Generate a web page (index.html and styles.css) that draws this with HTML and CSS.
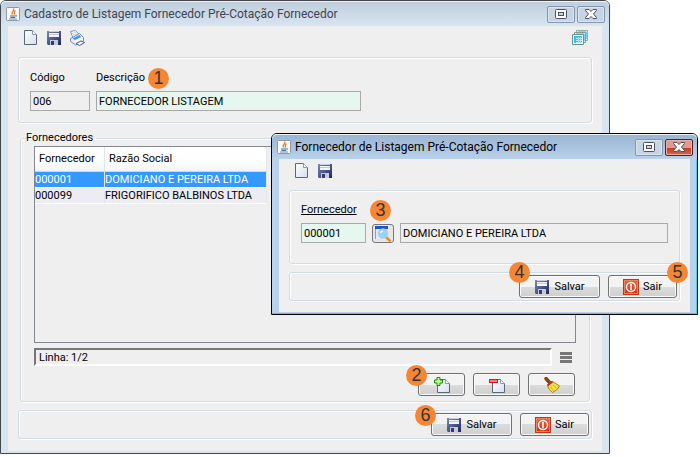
FILE: index.html
```html
<!DOCTYPE html>
<html lang="pt-BR">
<head>
    <meta charset="UTF-8">
    <meta name="viewport" content="width=device-width, initial-scale=1.0">
    <title>Cadastro de Listagem Fornecedor</title>
    <link rel="stylesheet" href="styles.css">
</head>
<body>
    <!-- ícones reutilizados -->
    <svg class="sprite" width="0" height="0" aria-hidden="true">
        <defs>
            <linearGradient id="gPaper" x1="0" y1="0" x2="1" y2="1">
                <stop offset="0" stop-color="#ffffff"/>
                <stop offset="1" stop-color="#d5dfea"/>
            </linearGradient>
            <linearGradient id="gDisk" x1="0" y1="0" x2="1" y2="1">
                <stop offset="0" stop-color="#7f8bb5"/>
                <stop offset="1" stop-color="#1e2458"/>
            </linearGradient>
            <linearGradient id="gRed" x1="0" y1="0" x2="0" y2="1">
                <stop offset="0" stop-color="#f2693f"/>
                <stop offset="1" stop-color="#d42c0c"/>
            </linearGradient>
        </defs>
        <symbol id="page" viewBox="0 0 16 16">
            <path d="M1.5 .5H9.500L13.500 4.500V14.500H1.500Z" fill="url(#gPaper)" stroke="#56697b"/>
            <path d="M9.500 .5V4.500H13.500" fill="#fff" stroke="#8a9aa8"/>
        </symbol>
        <symbol id="disk" viewBox="0 0 16 16">
            <path d="M1 1H15V15H2L1 14Z" fill="url(#gDisk)"/>
            <path d="M3 1H13V2H3Z" fill="#c9cfe2"/>
            <path d="M3 3H13V7H3Z" fill="#f4f5fa"/>
            <path d="M3 4.500H13" stroke="#c3c8da"/>
            <path d="M4 10H12V15H4Z" fill="#c5cbdd"/>
            <path d="M5 11H8V15H5Z" fill="#343b72"/>
        </symbol>
        <symbol id="printer" viewBox="0 0 16 16">
            <path d="M1.500 1.500L6.500 .5L10.500 5L4 8Z" fill="#fff" stroke="#7d90c6"/>
            <path d="M3 3.500L7 2.500M4 5L8 4" stroke="#c3cfea"/>
            <path d="M1.500 8.500L10.500 3.500L14.500 7.500V11L6.500 15L1.500 11.500Z" fill="#e3eaf8" stroke="#7688c4"/>
            <path d="M3.500 8.500L10.500 5L12 7L6 10Z" fill="#2f9cf0"/>
            <path d="M6.500 11.500L13.500 8" stroke="#fff" stroke-width="2"/>
            <path d="M7 13.500L12 11L15.500 12.500L10.500 15.500Z" fill="#fff" stroke="#42559d"/>
        </symbol>
        <symbol id="windows" viewBox="0 0 16 16">
            <path d="M4.500 .5H15.500V10.500H4.500Z" fill="#e9f7fa" stroke="#8fada9"/>
            <path d="M6 2H14V9" fill="none" stroke="#25b4e4"/>
            <path d="M2.500 2.500H13.500V12.500H2.500Z" fill="#e9f7fa" stroke="#7b9d99"/>
            <path d="M4 4H12V11" fill="none" stroke="#25b4e4"/>
            <path d="M.5 4.500H11.500V14.500H.5Z" fill="#fff" stroke="#6d918c"/>
            <path d="M2 6H10V13H2Z" fill="#35bff0"/>
            <path d="M4 8.500H10M4 10.500H10M4 12.500H10" stroke="#d9e6e9"/>
            <path d="M6.500 7V13M8.500 7V13" stroke="#a9dff2"/>
        </symbol>
        <symbol id="java" viewBox="0 0 14 14">
            <rect x=".5" y=".5" width="13" height="13" rx="1" fill="#f8f9fa" stroke="#8d99a6"/>
            <path d="M7.500 1.500C9.500 4 4.500 4.500 6.500 7.500M9.500 3.500C7 5 9.500 5.500 8 7.500" fill="none" stroke="#f07a12" stroke-width="1.300"/>
            <path d="M4 9H9.500M4.500 10.500H9" stroke="#3f6f9f"/>
            <path d="M3 12H11M9.500 8.500C11.500 8 11 9.500 9.500 10" fill="none" stroke="#6d90b3"/>
        </symbol>
        <symbol id="max" viewBox="0 0 12 10">
            <rect x=".5" y=".5" width="11" height="9" rx="1" fill="#fff" stroke="#4a5063"/>
            <rect x="3.500" y="3.500" width="5" height="3" fill="#cbd6e5" stroke="#4a5063"/>
        </symbol>
        <symbol id="cross" viewBox="0 0 12 10">
            <path d="M.5 .5H4L6 2.500L8 .5H11.500V1.500L8.500 5L11.500 8.500V9.500H8L6 7.500L4 9.500H.5V8.500L3.500 5L.5 1.500Z" fill="#fff" stroke="#4a5063"/>
        </symbol>
        <symbol id="power" viewBox="0 0 16 16">
            <rect x=".5" y=".5" width="15" height="15" fill="url(#gRed)" stroke="#b83a1c"/>
            <rect x="1.500" y="1.500" width="13" height="13" fill="none" stroke="#f4815d"/>
            <circle cx="8" cy="8" r="4.500" fill="none" stroke="#fff" stroke-width="1.400"/>
            <path d="M8 5V11" stroke="#fff" stroke-width="1.600"/>
        </symbol>
        <symbol id="add" viewBox="0 0 16 16">
            <path d="M3.500 2.500H11.500L15.500 6.500V15.500H3.500Z" fill="url(#gPaper)" stroke="#56697b"/>
            <path d="M11.500 2.500V6.500H15.500" fill="#fff" stroke="#8a9aa8"/>
            <path d="M3 .5H6V3H8.500V6H6V8.500H3V6H.5V3H3Z" fill="#c4f58a" stroke="#1c8a0e"/>
        </symbol>
        <symbol id="remove" viewBox="0 0 16 16">
            <path d="M3.500 2.500H11.500L15.500 6.500V15.500H3.500Z" fill="url(#gPaper)" stroke="#56697b"/>
            <path d="M11.500 2.500V6.500H15.500" fill="#fff" stroke="#8a9aa8"/>
            <rect x=".5" y="2.500" width="8" height="3" fill="#ff7d80" stroke="#e01420"/>
        </symbol>
        <symbol id="broom" viewBox="0 0 16 16">
            <path d="M2 1.500L5.500 5.500" stroke="#7b4a12" stroke-width="3.500" stroke-linecap="round"/>
            <path d="M3.500 8.500L8.500 4.500L15.500 9Q14 13 8.500 15.500Q4.500 13 3.500 8.500Z" fill="#f9e04a" stroke="#a5850c"/>
            <path d="M3.500 8.500L8.500 4.500" stroke="#c22b1c" stroke-width="2"/>
            <path d="M6.500 9.500L9 13.500M9 8L12.500 11" stroke="#cfae22"/>
        </symbol>
        <symbol id="search" viewBox="0 0 18 16">
            <rect x="1" y="0" width="13" height="13" fill="#dcebfc"/>
            <rect x="1" y="0" width="13" height="3" fill="#1c53d6"/>
            <path d="M1.500 3V13" stroke="#6fa3ea"/>
            <path d="M12 11L16.500 15.500" stroke="#d9932b" stroke-width="2.500"/>
            <circle cx="9" cy="7.500" r="4.500" fill="#8fd8fa" stroke="#b9c8dc" stroke-width="1.300"/>
            <path d="M6.500 7Q7 5 9 5" fill="none" stroke="#fff" stroke-width="1.500"/>
        </symbol>
    </svg>

    <main class="desktop">
        <section class="window main-window">
            <header class="titlebar">
                <svg class="java"><use href="#java"/></svg>
                <h1>Cadastro de Listagem Fornecedor Pré-Cotação Fornecedor</h1>
                <button class="win-btn" aria-label="Maximizar"><svg><use href="#max"/></svg></button>
                <button class="win-btn" aria-label="Fechar"><svg><use href="#cross"/></svg></button>
            </header>
            <div class="client">
                <div class="toolbar">
                    <button class="tool" aria-label="Novo"><svg><use href="#page"/></svg></button>
                    <button class="tool" aria-label="Salvar"><svg><use href="#disk"/></svg></button>
                    <button class="tool" aria-label="Imprimir"><svg><use href="#printer"/></svg></button>
                    <button class="tool last" aria-label="Janelas"><svg><use href="#windows"/></svg></button>
                </div>

                <div class="panel form">
                    <div class="field code">
                        <label for="codigo">Código</label>
                        <input type="text" id="codigo" value="006" readonly>
                    </div>
                    <div class="field desc">
                        <label for="descricao">Descrição</label>
                        <input type="text" id="descricao" class="editable" value="FORNECEDOR LISTAGEM">
                        <span class="badge b1">1</span>
                    </div>
                </div>

                <fieldset class="panel suppliers">
                    <legend>Fornecedores</legend>
                    <div class="grid">
                        <table>
                            <thead>
                                <tr><th>Fornecedor</th><th>Razão Social</th></tr>
                            </thead>
                            <tbody>
                                <tr class="selected"><td>000001</td><td>DOMICIANO E PEREIRA LTDA</td></tr>
                                <tr><td>000099</td><td>FRIGORIFICO BALBINOS LTDA</td></tr>
                            </tbody>
                        </table>
                    </div>
                    <div class="status">
                        <output>Linha: 1/2</output>
                        <button class="menu" aria-label="Menu"></button>
                    </div>
                    <div class="actions">
                        <button class="btn" aria-label="Adicionar"><svg><use href="#add"/></svg><span class="badge b2">2</span></button>
                        <button class="btn" aria-label="Remover"><svg><use href="#remove"/></svg></button>
                        <button class="btn" aria-label="Limpar"><svg><use href="#broom"/></svg></button>
                    </div>
                </fieldset>

                <div class="panel footer">
                    <button class="btn save"><svg><use href="#disk"/></svg>Salvar<span class="badge b6">6</span></button>
                    <button class="btn exit"><svg><use href="#power"/></svg>Sair</button>
                </div>
            </div>
        </section>

        <section class="window dialog">
            <header class="titlebar">
                <svg class="java"><use href="#java"/></svg>
                <h2>Fornecedor de Listagem Pré-Cotação Fornecedor</h2>
                <button class="win-btn" aria-label="Maximizar"><svg><use href="#max"/></svg></button>
                <button class="win-btn close" aria-label="Fechar"><svg><use href="#cross"/></svg></button>
            </header>
            <div class="client">
                <div class="toolbar">
                    <button class="tool" aria-label="Novo"><svg><use href="#page"/></svg></button>
                    <button class="tool" aria-label="Salvar"><svg><use href="#disk"/></svg></button>
                </div>

                <div class="panel form lookup">
                    <div class="field supplier">
                        <label for="fornecedor">Fornecedor</label>
                        <input type="text" id="fornecedor" class="editable" value="000001">
                        <span class="badge b3">3</span>
                    </div>
                    <button class="find" aria-label="Pesquisar"><svg><use href="#search"/></svg></button>
                    <input type="text" class="name" aria-label="Razão Social" value="DOMICIANO E PEREIRA LTDA" readonly>
                </div>

                <div class="panel footer">
                    <button class="btn save"><svg><use href="#disk"/></svg>Salvar<span class="badge b4">4</span></button>
                    <button class="btn exit"><svg><use href="#power"/></svg>Sair<span class="badge b5">5</span></button>
                </div>
            </div>
        </section>
    </main>
</body>
</html>
```
FILE: styles.css
```css
* {
    box-sizing: border-box;
}
body {
    margin: 0;
    background: #fff;
    color: #000;
    font: 11px/16px Roboto, "Noto Sans", sans-serif;
}
button, input {
    font: inherit;
    color: inherit;
}
button {
    padding: 0;
}
.sprite {
    position: absolute;
}
.desktop {
    position: relative;
    padding-right: 90px;
}

/* janelas */
.window {
    background: #d7e4f2;
    border: 1px solid #46464a;
    border-radius: 6px 6px 0 0;
    padding: 0 7px 2px;
}
.main-window {
    box-shadow: 0 2px 3px #eee;
}
.titlebar {
    display: flex;
    align-items: center;
    height: 25px;
    margin: 0 -7px;
    padding: 1px 4px 0 5px;
    border-radius: 5px 5px 0 0;
    background: linear-gradient(#bfcddb, #d7e4f2);
    box-shadow: inset 0 1px #eef3f8;
}
.titlebar h1, .titlebar h2 {
    flex: 1;
    margin: 0 0 0 4px;
    font: 12px/16px Roboto, "Open Sans", sans-serif;
    color: #3c4552;
    white-space: nowrap;
}
.java {
    width: 14px;
    height: 14px;
}
.win-btn {
    display: flex;
    align-items: center;
    justify-content: center;
    width: 28px;
    height: 17px;
    margin-left: 2px;
    border: 1px solid #8595ad;
    border-radius: 2px;
    background: #c6d4e4;
    box-shadow: inset 0 0 0 1px #dbe5f0;
}
.win-btn svg {
    width: 12px;
    height: 10px;
}
.client {
    background: #efefef;
    padding: 4px 10px 12px;
}

/* barra de ferramentas */
.toolbar {
    display: flex;
    gap: 7px;
    height: 16px;
    margin: 0 4px 0 5px;
}
.tool {
    width: 16px;
    height: 16px;
    border: 0;
    background: none;
}
.tool svg, .btn svg {
    display: block;
    width: 16px;
    height: 16px;
}
.tool.last {
    margin-left: auto;
}

/* painéis */
.panel {
    margin: 0;
    border: 1px solid #d3dce4;
    border-radius: 3px;
    box-shadow: 1px 1px #fff, inset 1px 1px #fff;
}
.form {
    display: flex;
    align-items: flex-end;
    gap: 6px;
    height: 66px;
    margin-top: 11px;
    padding: 11px;
}
.field {
    position: relative;
    display: flex;
    flex-direction: column;
    gap: 5px;
}
.field input, .name {
    width: 100%;
    height: 20px;
    padding: 0 2px;
    border: 1px solid #a9a9a9;
    border-radius: 0;
    background: #efefef;
}
.field .editable {
    background: #e5f7ee;
}
.code {
    width: 60px;
}
.desc {
    width: 265px;
}

/* fornecedores */
.suppliers {
    position: relative;
    margin: 7px 2px 0;
    padding: 0 13px 5px;
}
.suppliers legend {
    margin-left: -8px;
    padding: 0 3px 0 0;
}
.grid {
    height: 197px;
    border: 1px solid #828790;
}
table {
    width: 232px;
    border-collapse: separate;
    border-spacing: 0;
    table-layout: fixed;
}
th, td {
    padding: 0;
    text-align: left;
    font-weight: normal;
    white-space: nowrap;
    border-right: 1px solid #e4e5e9;
}
th {
    height: 25px;
    padding: 0 4px;
    background: linear-gradient(#fff 60%, #f2f3f4);
    border-bottom: 1px solid #d5d5d5;
}
th:first-child {
    width: 70px;
}
td {
    height: 16px;
    line-height: 15px;
    background: #ececf2;
    border-bottom: 1px solid #fff;
}
.selected td {
    background: #3399ff;
    color: #fff;
}
.status {
    display: flex;
    align-items: center;
    gap: 8px;
    margin-top: 5px;
}
.status output {
    flex: 1;
    height: 18px;
    padding-left: 3px;
    line-height: 15px;
    border: 2px solid;
    border-color: #777 #fff #fff #777;
}
.menu {
    width: 12px;
    height: 11px;
    margin-right: 4px;
    border: 0;
    background: repeating-linear-gradient(#777 0 3px, #efefef 3px 4px);
}
.actions {
    display: flex;
    justify-content: flex-end;
    gap: 8px;
    margin: 7px 1px 0 0;
}

/* botões */
.btn {
    position: relative;
    display: flex;
    align-items: center;
    justify-content: center;
    gap: 4px;
    width: 47px;
    height: 23px;
    border: 1px solid #707070;
    border-radius: 3px;
    background: linear-gradient(#f3f3f3 50%, #dcdcdc 50%, #cfcfcf);
    box-shadow: inset 0 0 0 1px #fafafa;
}
.save {
    width: 81px;
}
.exit {
    width: 69px;
}
.footer {
    display: flex;
    align-items: center;
    justify-content: flex-end;
    gap: 8px;
    height: 29px;
    margin-top: 8px;
    padding-right: 2px;
}

/* marcadores numerados */
.badge {
    position: absolute;
    width: 21px;
    height: 21px;
    border-radius: 50%;
    background: #f58634;
    color: #373435;
    font: 18px/21px "Liberation Sans", Arial, sans-serif;
    text-align: center;
}
.b1 {
    left: 52px;
    top: -2px;
}
.b2 {
    left: -13px;
    top: -9px;
}
.b3 {
    left: 69px;
    top: -2px;
}
.b4 {
    left: -11px;
    top: -14px;
}
.b5 {
    right: -12px;
    top: -14px;
}
.b6 {
    left: -17px;
    top: -9px;
}

/* caixa de diálogo */
.dialog {
    position: absolute;
    top: 133px;
    right: 2px;
    width: 427px;
    background: #b9d1ea;
    border-color: #000;
    box-shadow: inset -1px -1px #3fd0ee;
}
.dialog .titlebar {
    background: linear-gradient(#99b4d1, #b9d1ea);
}
.dialog h2 {
    color: #000;
}
.dialog .client {
    padding-bottom: 11px;
}
.dialog .close {
    background: linear-gradient(#e39a8d 50%, #bf3a22 50%, #d5684a);
    border-color: #5c1f28;
    box-shadow: inset 0 0 0 1px #eab0a4;
}
.lookup {
    height: 74px;
    padding-bottom: 20px;
}
.supplier {
    width: 65px;
}
.supplier label {
    text-decoration: underline;
}
.find {
    width: 22px;
    height: 19px;
    border: 1px solid #777;
    border-radius: 3px;
    background: #e6e6e6;
}
.find svg {
    display: block;
    width: 18px;
    height: 16px;
    margin: auto;
}
.name {
    flex: 1;
}
```
